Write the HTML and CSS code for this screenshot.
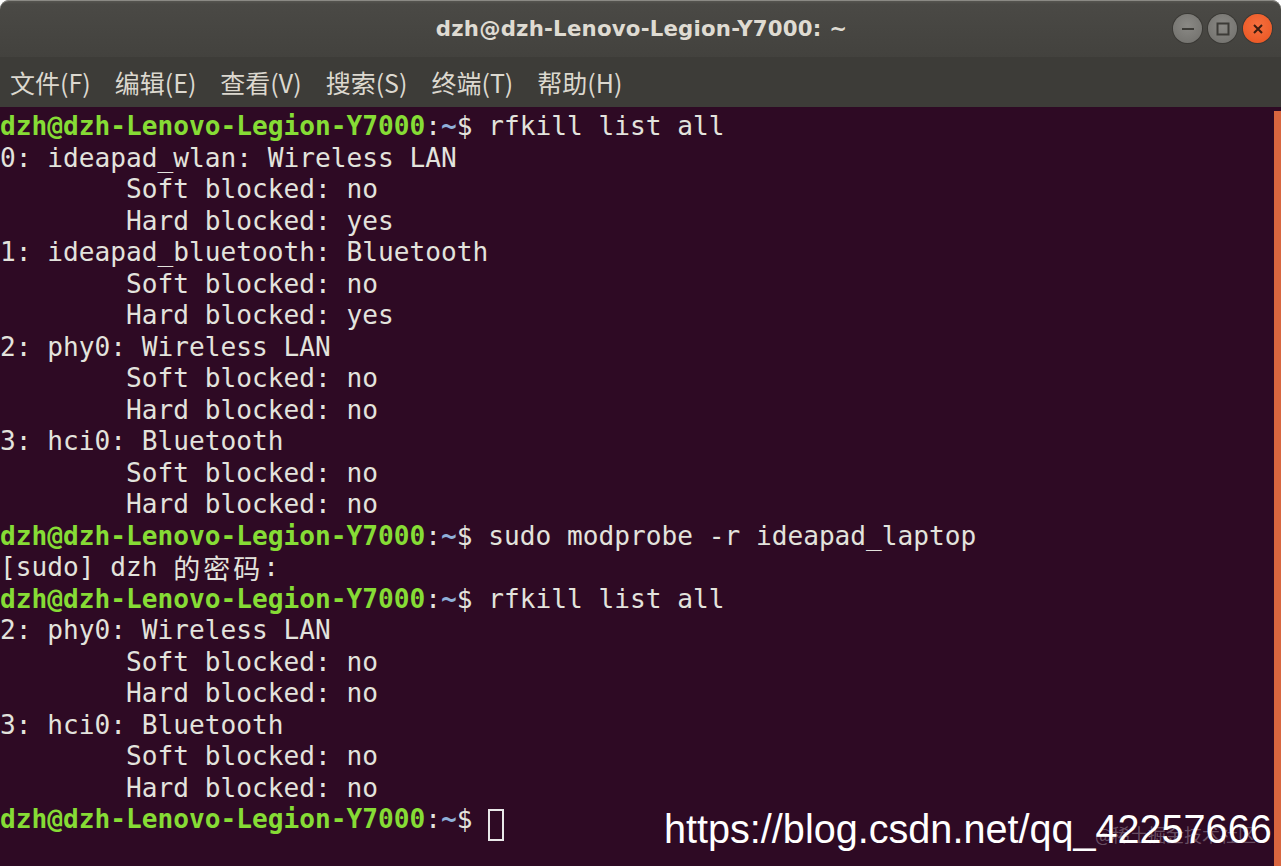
FILE: index.html
```html
<!DOCTYPE html>
<html>
<head>
<meta charset="utf-8">
<link rel="stylesheet" href="styles.css">
</head>
<body>
<div class="window">
  <div class="titlebar">
    <div class="title">dzh@dzh-Lenovo-Legion-Y7000: ~</div>
    <div class="controls">
      <span class="btn"><svg width="28" height="28" viewBox="0 0 28 28"><line x1="8" y1="14" x2="20" y2="14" stroke="#3c3b37" stroke-width="2"/></svg></span>
      <span class="btn"><svg width="28" height="28" viewBox="0 0 28 28"><rect x="8.5" y="8.5" width="11" height="11" fill="none" stroke="#3c3b37" stroke-width="2"/></svg></span>
      <span class="btn close"><svg width="28" height="28" viewBox="0 0 28 28"><path d="M10 10 L18 18 M18 10 L10 18" stroke="#3c1d10" stroke-width="2"/></svg></span>
    </div>
  </div>
  <div class="menubar">
    <span>文件(F)</span><span>编辑(E)</span><span>查看(V)</span><span>搜索(S)</span><span>终端(T)</span><span>帮助(H)</span>
  </div>
  <div class="terminal">
    <div class="screen">
      <div class="ln"><span class="u">dzh@dzh-Lenovo-Legion-Y7000</span>:<span class="d">~</span>$ rfkill list all</div>
      <div class="ln">0: ideapad_wlan: Wireless LAN</div>
      <div class="ln">        Soft blocked: no</div>
      <div class="ln">        Hard blocked: yes</div>
      <div class="ln">1: ideapad_bluetooth: Bluetooth</div>
      <div class="ln">        Soft blocked: no</div>
      <div class="ln">        Hard blocked: yes</div>
      <div class="ln">2: phy0: Wireless LAN</div>
      <div class="ln">        Soft blocked: no</div>
      <div class="ln">        Hard blocked: no</div>
      <div class="ln">3: hci0: Bluetooth</div>
      <div class="ln">        Soft blocked: no</div>
      <div class="ln">        Hard blocked: no</div>
      <div class="ln"><span class="u">dzh@dzh-Lenovo-Legion-Y7000</span>:<span class="d">~</span>$ sudo modprobe -r ideapad_laptop</div>
      <div class="ln">[sudo] dzh <span class="w">的</span><span class="w">密</span><span class="w">码</span>:</div>
      <div class="ln"><span class="u">dzh@dzh-Lenovo-Legion-Y7000</span>:<span class="d">~</span>$ rfkill list all</div>
      <div class="ln">2: phy0: Wireless LAN</div>
      <div class="ln">        Soft blocked: no</div>
      <div class="ln">        Hard blocked: no</div>
      <div class="ln">3: hci0: Bluetooth</div>
      <div class="ln">        Soft blocked: no</div>
      <div class="ln">        Hard blocked: no</div>
      <div class="ln"><span class="u">dzh@dzh-Lenovo-Legion-Y7000</span>:<span class="d">~</span>$ <span class="cursor"> </span></div>
    </div>
    <div class="scrollstrip"></div>
    <div class="wm-faint">@稀土掘金技术社区</div>
    <div class="watermark">https://blog.csdn.net/qq_42257666</div>
  </div>
</div>
</body>
</html>
```

FILE: styles.css
```css
html, body {
  margin: 0;
  padding: 0;
  background: #ffffff;
}
.window {
  width: 1281px;
  height: 866px;
  display: flex;
  flex-direction: column;
  overflow: hidden;
}
.titlebar {
  position: relative;
  height: 57px;
  flex: none;
  background: linear-gradient(#5a5954 0px, #4a4945 4px, #43423e 100%);
  border-radius: 9px 9px 0 0;
  box-shadow: inset 0 1px 0 #8a8984;
  display: flex;
  align-items: center;
  justify-content: center;
}
.title {
  font-family: "DejaVu Sans", "Noto Sans", sans-serif;
  font-weight: bold;
  font-size: 21.3px;
  color: #dfdbd2;
  letter-spacing: 0.2px;
  margin-left: 2px;
}
.controls {
  position: absolute;
  right: 9px;
  top: 14px;
  display: flex;
  gap: 6px;
}
.btn {
  width: 29px;
  height: 29px;
  border-radius: 50%;
  background: radial-gradient(circle at 50% 40%, #8a8985, #6f6e6a);
  box-shadow: 0 0 0 1px #3a3935;
  display: flex;
  align-items: center;
  justify-content: center;
}
.btn.close {
  background: radial-gradient(circle at 50% 40%, #f6703f, #e9531f);
}
.menubar {
  height: 50px;
  flex: none;
  background: #3d3c38;
  display: flex;
  align-items: center;
  gap: 24px;
  padding: 0 0 0 10px;
  font-family: "Noto Sans CJK SC", "Noto Sans", sans-serif;
  font-size: 25px;
  color: #dcd8cf;
}
.terminal {
  position: relative;
  flex: 1;
  background: #2e0a24;
  display: flex;
  padding-top: 4px;
}
.screen {
  flex: 1;
  font-family: "DejaVu Sans Mono", "Liberation Mono", "Noto Sans CJK SC", monospace;
  font-size: 26.16px;
  line-height: 31.5px;
  color: #e3e3dd;
}
.ln {
  height: 31.5px;
  white-space: pre;
}
.u {
  color: #86dc35;
  font-weight: bold;
}
.d {
  color: #8fb0d8;
  font-weight: bold;
}
.w {
  display: inline-block;
  width: 2ch;
  font-family: "Noto Sans CJK SC", sans-serif;
  font-size: 27px;
  vertical-align: top;
}
.cursor {
  display: inline-block;
  width: 16px;
  height: 32px;
  border: 2px solid #e8e8e8;
  box-sizing: border-box;
  vertical-align: -7px;
}
.scrollstrip {
  width: 7px;
  flex: none;
  background: #d9663f;
}
.watermark {
  position: absolute;
  left: 664px;
  top: 700px;
  font-family: "Liberation Sans", Arial, sans-serif;
  font-size: 40px;
  color: #ffffff;
  transform-origin: left top;
  transform: scaleX(0.99);
  white-space: nowrap;
}
.wm-faint {
  position: absolute;
  left: 1095px;
  top: 714px;
  font-family: "Noto Sans CJK SC", sans-serif;
  font-size: 18px;
  color: rgba(200, 190, 200, 0.4);
  white-space: nowrap;
}
```
